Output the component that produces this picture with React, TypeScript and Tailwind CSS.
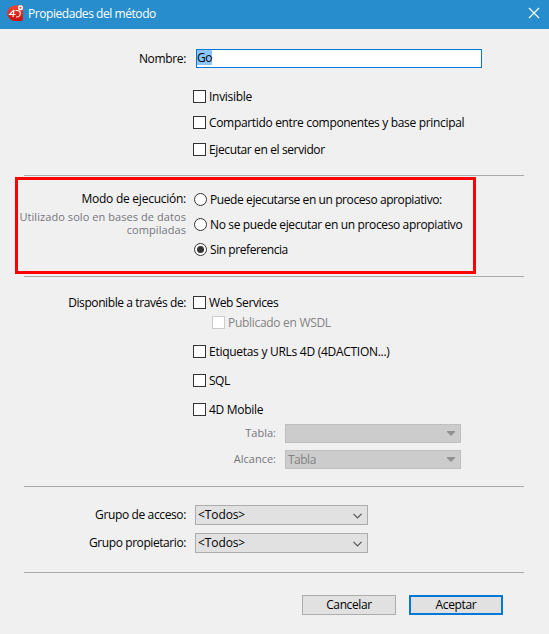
import type { ReactNode } from "react";

function Label({ children, width = "w-[186px]", className = "" }: { children: ReactNode; width?: string; className?: string }) {
  return <div className={`shrink-0 text-right whitespace-nowrap ${width} ${className}`}>{children}</div>;
}

function Check({ text, className = "", textClass = "", disabled = false }: { text: string; className?: string; textClass?: string; disabled?: boolean }) {
  return (
    <label className={`flex h-[13px] items-center ${className}`}>
      <span className={`size-[13px] shrink-0 border bg-white ${disabled ? "border-[#cccccc]" : "border-[#333333]"}`} />
      <span className={`ml-[3px] whitespace-nowrap ${disabled ? "text-[#838383]" : ""} ${textClass}`}>{text}</span>
    </label>
  );
}

function Radio({ text, textClass = "", checked = false }: { text: string; textClass?: string; checked?: boolean }) {
  return (
    <label className="flex h-[13px] items-center">
      <span className="flex size-[13px] shrink-0 items-center justify-center rounded-full border border-[#333333] bg-white">
        {checked && <span className="size-[7px] rounded-full bg-[#333333]" />}
      </span>
      <span className={`ml-[3px] whitespace-nowrap ${textClass}`}>{text}</span>
    </label>
  );
}

function Line({ className = "" }: { className?: string }) {
  return <div className={`ml-6 h-px w-[500px] shrink-0 bg-[#a9a9a9] ${className}`} />;
}

function DisabledSelect({ text }: { text: string }) {
  return (
    <div className="ml-[9px] flex h-[19px] w-[176px] items-center justify-between border border-[#bfbfbf] bg-[#cccccc] pr-[5px] pl-[2px] text-[#838383]">
      <span className="tracking-[-0.5px]">{text}</span>
      <svg width="8" height="5" viewBox="0 0 8 5"><path d="M0 0H8V1L4 5L0 1Z" fill="#919191" /></svg>
    </div>
  );
}

function Select({ text }: { text: string }) {
  return (
    <div className="ml-[9px] flex h-5 w-[173px] items-center justify-between border border-[#acacac] bg-[#e1e1e1] pr-[5px] pl-[2px]">
      <span className="tracking-[-0.1px]">{text}</span>
      <svg width="9" height="6" viewBox="0 0 9 6" fill="none" className="mt-px"><path d="M0.5 0.8L4.5 4.8L8.5 0.8" stroke="#555" strokeWidth="1.2" /></svg>
    </div>
  );
}

export default function App() {
  return (
    <div className="flex h-[634px] w-[549px] flex-col overflow-hidden bg-[#f0f0f0] font-['Open_Sans',sans-serif] text-[12px] leading-[16px] text-black">
      <header className="flex h-[29px] shrink-0 items-center bg-[#288dcc] pr-[9px] pl-[7px] text-white">
        <svg width="17" height="17" viewBox="0 0 17 17" className="-mt-[3px]">
          <defs>
            <linearGradient id="badge" x1="0" y1="0" x2="0" y2="1">
              <stop offset="0" stopColor="#f0482f" />
              <stop offset="1" stopColor="#c90f08" />
            </linearGradient>
          </defs>
          <path d="M8 0.5H16V14Q16 16 14 16H8A7.75 7.75 0 0 1 8 0.5Z" fill="url(#badge)" />
          <path d="M7 5L2.5 9.5H8.5M7 5L6 12M8.5 5.5H10.5Q13.7 6 13.3 9Q12.8 12.2 9 12" fill="none" stroke="#fff" strokeWidth="1.1" />
          <circle cx="13.5" cy="2.8" r="1.8" fill="#e83a28" stroke="#fff" strokeWidth="1.5" />
        </svg>
        <span className="-mt-px ml-1 tracking-[-0.44px] whitespace-nowrap">Propiedades del método</span>
        <svg width="12" height="12" viewBox="0 0 12 12" className="-mt-[3px] ml-auto"><path d="M1 1L11 11M11 1L1 11" stroke="#fff" strokeWidth="1.2" /></svg>
      </header>

      <div className="mt-5 flex h-[19px] shrink-0 items-center">
        <Label className="tracking-[-0.35px]">Nombre:</Label>
        <div className="ml-[10px] h-[19px] w-[286px] border border-[#0078d7] bg-white">
          <span className="block h-[15px] w-[15px] bg-[#8cc4fb] leading-[15px] tracking-[-0.5px]">Go</span>
        </div>
      </div>
      <Check className="mt-[22px] ml-[193px]" textClass="tracking-[-0.28px]" text="Invisible" />
      <Check className="mt-[13px] ml-[193px]" textClass="tracking-[-0.33px]" text="Compartido entre componentes y base principal" />
      <Check className="mt-[14px] ml-[193px]" textClass="tracking-[-0.38px]" text="Ejecutar en el servidor" />
      <Line className="mt-[19px]" />

      <section className="mt-px ml-[15px] flex h-[97px] w-[461px] shrink-0 border-[3px] border-[#ff0000]">
        <div className="w-[168px] shrink-0 pt-[11px] text-right whitespace-nowrap">
          <div className="tracking-[-0.25px]">Modo de ejecución:</div>
          <div className="mt-[3px] text-[11px] leading-[13px] tracking-[0.07px] text-[#75757c]">Utilizado solo en bases de datos<br />compiladas</div>
        </div>
        <div className="ml-2 flex flex-col gap-3 pt-[13px]">
          <Radio textClass="tracking-[-0.41px]" text="Puede ejecutarse en un proceso apropiativo:" />
          <Radio textClass="tracking-[-0.36px]" text="No se puede ejecutar en un proceso apropiativo" />
          <Radio textClass="tracking-[-0.43px]" text="Sin preferencia" checked />
        </div>
      </section>
      <Line className="mt-[2px]" />

      <div className="mt-[19px] flex h-[13px] shrink-0 items-center">
        <Label className="tracking-[-0.4px]">Disponible a través de:</Label>
        <Check className="ml-[7px]" textClass="tracking-[-0.37px]" text="Web Services" />
      </div>
      <Check className="mt-[7px] ml-[212px]" textClass="tracking-[-0.3px]" text="Publicado en WSDL" disabled />
      <Check className="mt-4 ml-[193px]" textClass="tracking-[-0.28px]" text="Etiquetas y URLs 4D (4DACTION...)" />
      <Check className="mt-4 ml-[193px]" textClass="tracking-[-0.5px]" text="SQL" />
      <Check className="mt-4 ml-[193px]" textClass="tracking-[-0.3px]" text="4D Mobile" />
      <div className="mt-2 flex h-[19px] shrink-0 items-center text-[#75757c]">
        <Label width="w-[276px]" className="-mt-0.5 text-[11px]">Tabla:</Label>
        <DisabledSelect text="" />
      </div>
      <div className="mt-[7px] flex h-[19px] shrink-0 items-center text-[#75757c]">
        <Label width="w-[276px]" className="-mt-0.5 text-[11px]">Alcance:</Label>
        <DisabledSelect text="Tabla" />
      </div>
      <Line className="mt-[17px]" />

      <div className="mt-[18px] flex h-5 shrink-0 items-center">
        <Label className="tracking-[-0.37px]">Grupo de acceso:</Label>
        <Select text="<Todos>" />
      </div>
      <div className="mt-2 flex h-5 shrink-0 items-center">
        <Label className="tracking-[-0.42px]">Grupo propietario:</Label>
        <Select text="<Todos>" />
      </div>
      <Line className="mt-[19px]" />

      <footer className="mt-[22px] ml-[302px] flex gap-[13px]">
        <button className="h-5 w-[94px] border border-[#adadad] bg-[#e1e1e1] leading-[18px] tracking-[-0.37px]">Cancelar</button>
        <button className="h-5 w-[94px] border-2 border-[#0078d7] bg-[#e1e1e1] leading-4 tracking-[-0.35px]">Aceptar</button>
      </footer>
    </div>
  );
}
